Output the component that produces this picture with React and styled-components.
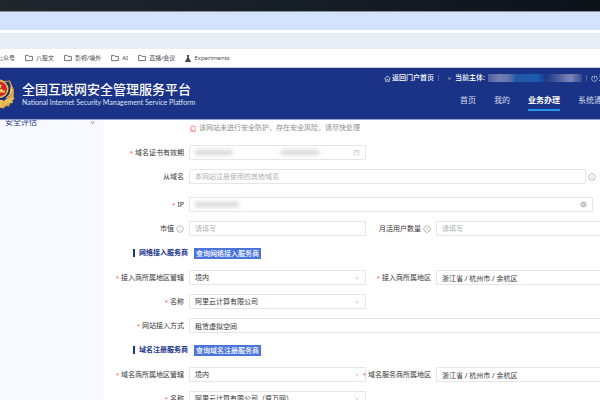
import React from "react";
import styled, { createGlobalStyle } from "styled-components";
import {
  AiFillCloseCircle,
  AiOutlineAlert,
  AiOutlineCalendar,
  AiOutlineDown,
  AiOutlineHome,
  AiOutlineInfoCircle,
  AiOutlinePoweroff,
} from "react-icons/ai";

const bookmarks = ["公众号", "八股文", "影视/墙外", "AI", "直播/会议"];
const navItems = ["首页", "我的", "业务办理", "系统通知"];

function Folder() {
  return (
    <svg width="8" height="8" viewBox="0 0 16 16" fill="none">
      <path
        d="M1.2 13.2V2.8h5l1.8 2h6.8v8.4z"
        stroke="#5a5d61"
        strokeWidth="1.7"
        strokeLinejoin="round"
      />
    </svg>
  );
}

function Flask() {
  return (
    <svg width="6" height="7" viewBox="0 0 12 14" fill="#45484d">
      <path d="M3.5 0h5v1.600h-.8v3.600L9 8l2.600 4c.5 1 .1 2-1 2H1.400c-1.100 0-1.500-1-1-2L3 8l1.300-2.800V1.600h-.8z" />
    </svg>
  );
}

function Emblem() {
  return (
    <svg width="31" height="32" viewBox="0 0 31 32">
      <path
        d="M15.500 1 20 3l6-.5 2 5c2 3 2.500 7 1.500 10.500l1 3-2 1 .5 3-3 .5-1 3-3-.5-2.500 2.500-4-1-4 1L9 28l-3 .5-1-3-3-.5.500-3-2-1 1-3C.5 14.500 1 10.500 3 7.500l2-5 6 .5z"
        fill="#dda544"
      />
      <path d="M15.500 2 19 4l6-.5 1.500 4-1 9c-1.500 4-6 6.500-10 8.500-4-2-8.500-4.500-10-8.500l-1-9 1.500-4 6 .5z" fill="#1c2f7c" />
      <circle cx="15.500" cy="11" r="9" fill="#e9bd58" />
      <circle cx="15.500" cy="11" r="7.500" fill="#c92a24" />
      <path d="m15.500 5 .8 1.800 1.900.2-1.400 1.300.4 1.900-1.700-1-1.700 1 .4-1.900L12.800 7l1.900-.2z" fill="#f8d676" />
      <path d="M10 14.500h11v-2h-2l-1-1.500h-5l-1 1.500h-2z" fill="#f4c75e" />
      <path
        d="M2 20c3 2 7 2 9 5M3 23c3 1 6 1 8 4M29 20c-3 2-7 2-9 5M28 23c-3 1-6 1-8 4M28 11c-1 4-3 7-6 9M3 11c1 4 3 7 6 9"
        fill="none"
        stroke="#f9dc86"
        strokeWidth="1"
      />
      <path d="M12 22h7v6l-3.500 2-3.500-2z" fill="#efbe54" />
    </svg>
  );
}

function Label({ children, required, htmlFor, info, second }) {
  return (
    <FieldLabel htmlFor={htmlFor} $second={second}>
      {required && <Star>*</Star>}
      {children}
      {info && <AiOutlineInfoCircle size={8} color="#8c8c8c" />}
    </FieldLabel>
  );
}

function SelectField({ id, value }) {
  return (
    <Field>
      <Select id={id} defaultValue={value}>
        <option>{value}</option>
      </Select>
      <AiOutlineDown size={6} />
    </Field>
  );
}

function App() {
  return (
    <Window lang="zh-CN">
      <GlobalStyle />
      <DesktopStrip />
      <TabStrip />
      <AddressBar>
        <Address />
      </AddressBar>
      <Bookmarks>
        {bookmarks.map((name) => (
          <Bookmark href="#" key={name}>
            <Folder />
            {name}
          </Bookmark>
        ))}
        <Bookmark href="#">
          <Flask />
          Experiments
        </Bookmark>
      </Bookmarks>

      <Header>
        <Brand>
          <Emblem />
          <BrandText>
            <Title>全国互联网安全管理服务平台</Title>
            <Subtitle>National Internet Security Management Service Platform</Subtitle>
          </BrandText>
        </Brand>
        <HeaderRight>
          <Account>
            <AccountLink href="#">
              <AiOutlineHome size={7} />
              返回门户首页
            </AccountLink>
            <Divider />
            <Subject>
              <AiOutlineDown size={5} />
              当前主体:
              <HiddenSubject />
            </Subject>
            <Divider />
            <AccountLink href="#">
              <AiOutlinePoweroff size={7} />
              退出
            </AccountLink>
          </Account>
          <Nav>
            {navItems.map((item) => (
              <NavLink href="#" key={item} $active={item === "业务办理"}>
                {item}
              </NavLink>
            ))}
          </Nav>
        </HeaderRight>
      </Header>

      <Body>
        <Sidebar>
          <MenuItem>
            安全评估
            <AiOutlineDown size={5} />
          </MenuItem>
        </Sidebar>
        <Form>
          <Warning>
            <AiOutlineAlert size={8} color="#f5504e" />
            该网站未进行安全防护，存在安全风险，请尽快处理
          </Warning>

          <Label required htmlFor="cert">域名证书有效期</Label>
          <Field>
            <Smudge $width={38} />
            <DateInput id="cert" aria-label="开始日期" />
            <Smudge $width={38} />
            <DateInput aria-label="结束日期" />
            <AiOutlineCalendar size={7} />
          </Field>

          <Label htmlFor="alias">从域名</Label>
          <WideCell $space>
            <Field>
              <Input id="alias" placeholder="本网站注册使用的其他域名" />
            </Field>
            <AiOutlineInfoCircle size={8} color="#8c8c8c" />
          </WideCell>

          <Label required htmlFor="ip">IP</Label>
          <WideCell>
            <Field>
              <Smudge $width={44} />
              <Input id="ip" />
              <AiFillCloseCircle size={7} />
            </Field>
          </WideCell>

          <Label htmlFor="market" info>市值</Label>
          <Field>
            <Input id="market" placeholder="请填写" />
          </Field>
          <Label second htmlFor="users" info>月活用户数量</Label>
          <Field>
            <Input id="users" placeholder="请填写" />
          </Field>

          <Section>
            <SectionTitle>网络接入服务商</SectionTitle>
            <QueryButton type="button">查询网络接入服务商</QueryButton>
          </Section>

          <Label required htmlFor="isp-scope">接入商所属地区管辖</Label>
          <SelectField id="isp-scope" value="境内" />
          <Label second required htmlFor="isp-area">接入商所属地区</Label>
          <Field>
            <Input id="isp-area" defaultValue="浙江省 / 杭州市 / 余杭区" />
          </Field>

          <Label required htmlFor="isp-name">名称</Label>
          <SelectField id="isp-name" value="阿里云计算有限公司" />

          <Label required htmlFor="access">网站接入方式</Label>
          <FullField>
            <Input id="access" defaultValue="租赁虚拟空间" />
          </FullField>

          <Section>
            <SectionTitle>域名注册服务商</SectionTitle>
            <QueryButton type="button">查询域名注册服务商</QueryButton>
          </Section>

          <Label required htmlFor="dns-scope">域名商所属地区管辖</Label>
          <SelectField id="dns-scope" value="境内" />
          <Label second required htmlFor="dns-area">域名服务商所属地区</Label>
          <Field>
            <Input id="dns-area" defaultValue="浙江省 / 杭州市 / 余杭区" />
          </Field>

          <Label required htmlFor="dns-name">名称</Label>
          <SelectField id="dns-name" value="阿里云计算有限公司（原万网）" />
        </Form>
      </Body>
    </Window>
  );
}

export default App;

const GlobalStyle = createGlobalStyle`
  * {
    box-sizing: border-box;
  }
  body {
    margin: 0;
    background: #fff;
    font-family: "Noto Sans", "Noto Sans CJK SC", sans-serif;
    font-size: 7px;
    line-height: 10px;
    color: #333;
  }
  input, select, button {
    font: inherit;
    color: inherit;
  }
  a {
    color: inherit;
    text-decoration: none;
  }
  svg {
    flex-shrink: 0;
  }
`;

const Window = styled.div`
  display: flex;
  flex-direction: column;
  height: 100vh;
  overflow: hidden;
`;
const DesktopStrip = styled.div`
  flex: 0 0 12px;
  background: linear-gradient(90deg, #20272d, #161e25 50%, #0c1218);
  border-bottom: 1px solid #8a9095;
`;
const TabStrip = styled.div`
  flex: 0 0 18px;
  background: #d3e3fd;
`;
const AddressBar = styled.div`
  padding: 3px 0 0;
`;
const Address = styled.div`
  height: 16px;
  background: #e9edf6;
`;
const Bookmarks = styled.nav`
  display: flex;
  flex: 0 0 19px;
  align-items: center;
  gap: 10px;
  margin-left: -14px;
  border-bottom: 1px solid #c9cfdf;
  font-size: 6px;
  color: #46494d;
  white-space: nowrap;
`;
const Bookmark = styled.a`
  display: flex;
  align-items: center;
  gap: 3px;
`;

const Header = styled.header`
  display: flex;
  justify-content: space-between;
  flex: 0 0 52px;
  position: relative;
  z-index: 1;
  margin-right: -13px;
  background: #1a3386;
  border-bottom: 1px solid #93a1cf;
  color: #fff;
  white-space: nowrap;
`;
const Brand = styled.div`
  display: flex;
  align-items: center;
  gap: 7px;
  margin-left: -16px;
`;
const BrandText = styled.div``;
const Title = styled.h1`
  margin: 0;
  font-size: 13px;
  line-height: 16px;
  font-weight: 500;
`;
const Subtitle = styled.p`
  margin: 0;
  font-family: Lato, sans-serif;
  font-size: 7px;
  line-height: 10px;
  color: #dfe4f4;
`;
const HeaderRight = styled.div`
  display: flex;
  flex-direction: column;
  align-items: flex-end;
  padding-top: 5px;
`;
const Account = styled.div`
  display: flex;
  align-items: center;
  font-weight: 500;
`;
const AccountLink = styled.a`
  display: flex;
  align-items: center;
  gap: 1px;
`;
const Divider = styled.span`
  width: 1px;
  height: 6px;
  margin: 0 4px;
  background: #52669f;
`;
const Subject = styled.div`
  display: flex;
  align-items: center;
  gap: 3px;
  padding-left: 4px;
`;
const HiddenSubject = styled.span`
  width: 94px;
  height: 8px;
  background: linear-gradient(
    90deg,
    #4b5c9c,
    #7580b2 12%,
    #6674ab 22%,
    #1d58a8 30%,
    #1c5cae 52%,
    #1d3889 62%,
    #4b5b9b 74%,
    #7d87b6 88%,
    #34498f
  );
`;
const Nav = styled.nav`
  display: flex;
  gap: 18px;
  padding: 10px 3px 0 0;
`;
const NavLink = styled.a`
  padding: 2px 0 4px;
  font-size: 8px;
  line-height: 10px;
  font-weight: ${(props) => (props.$active ? 700 : 400)};
  color: ${(props) => (props.$active ? "#fff" : "#d5dbed")};
  border-bottom: 2px solid ${(props) => (props.$active ? "#2393ee" : "transparent")};
`;

const Body = styled.div`
  display: flex;
  flex: 1;
  min-height: 0;
`;
const Sidebar = styled.aside`
  flex: 0 0 104px;
  background: #f7f9fe;
`;
const MenuItem = styled.button`
  display: flex;
  align-items: center;
  justify-content: space-between;
  width: 100%;
  height: 16px;
  margin-top: -6px;
  padding: 0 9px 0 5px;
  border: 0;
  background: none;
  font-size: 8px;
  color: #243b8c;
`;

/* the form is wider than the visible part of the page */
const Form = styled.form`
  display: grid;
  grid-template-columns: 85px 1fr 70px 1fr;
  align-content: start;
  flex: 1;
  gap: 9px 0;
  margin-right: -13px;
`;
const Warning = styled.p`
  grid-column: 2 / -1;
  display: flex;
  align-items: center;
  gap: 2px;
  height: 16px;
  margin: 0;
  color: #8f8f8f;
`;
const FieldLabel = styled.label`
  grid-column-start: ${(props) => (props.$second ? 3 : 1)};
  display: flex;
  align-items: center;
  justify-content: flex-end;
  gap: 2px;
  min-width: 0;
  height: 15px;
  padding-right: 5px;
  white-space: nowrap;
`;
const Star = styled.span`
  font-size: 6px;
  color: #f5504e;
`;
const Field = styled.div`
  display: flex;
  align-items: center;
  flex: 1;
  min-width: 0;
  height: 15px;
  padding: 0 5px;
  border: 1px solid #e6e6e6;
  border-radius: 1px;
  background: #fff;
  color: #bfbfbf;
`;
const FullField = styled(Field)`
  grid-column: 2 / -1;
`;
const WideCell = styled.div`
  grid-column: 2 / -1;
  display: flex;
  align-items: center;
  gap: 2px;
  margin-right: ${(props) => (props.$space ? "17px" : "20px")};
  margin-bottom: ${(props) => (props.$space ? "4px" : "0")};
`;
const Input = styled.input`
  flex: 1;
  min-width: 0;
  height: 13px;
  padding: 0;
  border: 0;
  outline: 0;
  background: transparent;
  color: #333;
  &::placeholder {
    color: #b0b0b0;
    opacity: 1;
  }
`;
const DateInput = styled(Input)`
  &:first-of-type {
    flex: 0 0 48px;
  }
`;
const Select = styled.select`
  flex: 1;
  min-width: 0;
  height: 13px;
  padding: 0;
  border: 0;
  outline: 0;
  appearance: none;
  background: transparent;
  color: #333;
`;
const Smudge = styled.span`
  flex: 0 0 ${(props) => props.$width}px;
  height: 5px;
  background: #d6d6d6;
  filter: blur(2px);
`;
const Section = styled.div`
  grid-column: 1 / -1;
  display: flex;
  align-items: center;
  gap: 6px;
  height: 16px;
  padding-left: 29px;
`;
const SectionTitle = styled.h2`
  margin: 0;
  padding-left: 4px;
  border-left: 2px solid #1a3386;
  font-size: 7px;
  line-height: 8px;
  font-weight: 700;
  color: #1a3386;
`;
const QueryButton = styled.button`
  height: 11px;
  padding: 0 2px;
  border: 0;
  background: #4b73dc;
  color: #fff;
  font-weight: 500;
  line-height: 11px;
`;
